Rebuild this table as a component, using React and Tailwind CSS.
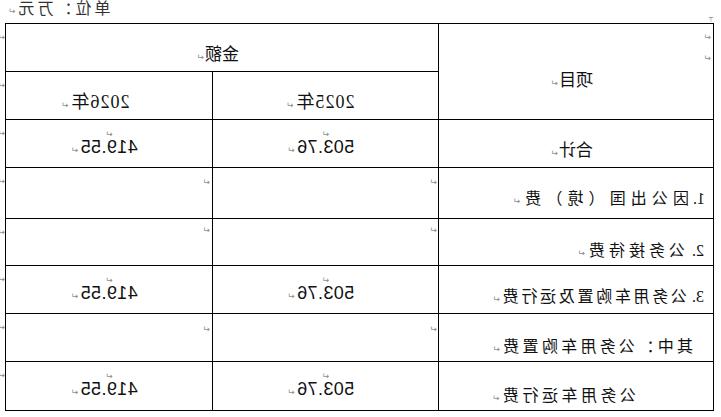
import React from "react";

// 段落标记（Word 的回车符）
const Mark = ({ className = "" }) => (
  <span
    className={`inline-block font-['DejaVu_Sans',sans-serif] text-[9px] leading-[8px] tracking-normal text-[#8c8c8c] ${className}`}
  >
    ↵
  </span>
);

// 居中文字后面的回车符，不占宽度
const TailMark = ({ className = "" }) => (
  <span className="inline-block w-0 whitespace-nowrap text-left">
    <Mark className={className} />
  </span>
);

const cell = "border-r border-b border-black";

const NumberCell = ({ value, pad = "" }) => (
  <div className={`${cell} text-center`}>
    <div className="mt-[6px] h-[8px] leading-[8px]">
      <Mark />
    </div>
    <div
      className={`mt-[2px] whitespace-nowrap font-['Liberation_Sans',sans-serif] text-[18px] leading-[22px] tracking-[0.4px] ${pad}`}
    >
      {value}
      <TailMark className="ml-[2px]" />
    </div>
  </div>
);

const EmptyCell = ({ pad }) => (
  <div className={`${cell} ${pad}`}>
    <div className="h-[8px] leading-[8px]">
      <Mark />
    </div>
  </div>
);

const rows = [
  { num: "1.", text: "因公出国（境）费", pl: "pl-[8px]", gap: "ml-[4px]", tr: "tracking-[5.1px]", pt: "pt-[18px]", nums: false, mt: "pt-[6px]" },
  { num: "2.", text: "公务接待费", pl: "pl-[9px]", gap: "ml-[7px]", tr: "tracking-[4px]", pt: "pt-[19px]", nums: false, mt: "pt-[3px]" },
  { num: "3.", text: "公务用车购置及运行费", pl: "pl-[9px]", gap: "ml-[5px]", tr: "tracking-[2.7px]", pt: "pt-[18px]", nums: true },
  { num: "", text: "其中：公务用车购置费", pl: "pl-[20px]", gap: "", tr: "tracking-[3.3px]", pt: "pt-[20px]", nums: false, mt: "pt-[7px]" },
  { num: "", text: "公务用车运行费", pl: "pl-[77px]", gap: "", tr: "tracking-[3.5px]", pt: "pt-[21px]", nums: true },
];

const rowMarks = ["mt-[6px]", "mt-[40px]", "mt-[40px]", "mt-[40px]", "mt-[43px]", "mt-[39px]", "mt-[40px]", "mt-[40px]"];

export default function App() {
  return (
    <div className="w-[721px] h-[417px] overflow-hidden bg-white -scale-x-100 text-[#111] font-['Noto_Sans_CJK_SC',sans-serif]">
      {/* 顶部：单位 */}
      <div className="h-[23px] flex justify-between">
        <span className="ml-[8px] mt-[15px] font-['DejaVu_Sans',sans-serif] text-[7px] leading-[7px] text-[#8c8c8c]">
          ┬
        </span>
        <div className="pr-[8px] whitespace-nowrap text-[16px] leading-[14px] text-[#333]">
          <span className="tracking-[3px]">单位：万元</span>
          <Mark />
        </div>
      </div>

      <div className="flex">
        <div className="ml-[7px] grid grid-cols-[275px_226px_207px] grid-rows-[48px_48px_48px_51px_47px_48px_48px_49px] border-l border-t border-black">
          {/* 项目 */}
          <div className={`${cell} row-span-2`}>
            <div className="ml-[2px] mt-[5px] h-[8px] leading-[8px]">
              <Mark />
            </div>
            <div className="ml-[2px] mt-[13px] h-[8px] leading-[8px]">
              <Mark />
            </div>
            <div className="mt-[10px] text-center text-[17px] leading-[22px]">
              项目
              <TailMark className="ml-[1px]" />
            </div>
          </div>

          {/* 金额 */}
          <div className={`${cell} col-span-2 pt-[18px] text-center text-[17px] leading-[22px]`}>
            金额
            <TailMark className="ml-[1px]" />
          </div>

          <div className={`${cell} pt-[19px] text-center whitespace-nowrap font-['Liberation_Serif','Noto_Sans_CJK_SC',serif] text-[18px] leading-[22px]`}>
            <span className="tracking-[1px]">2025</span>年
            <TailMark className="ml-[3px]" />
          </div>
          <div className={`${cell} pt-[19px] pl-[17px] text-center whitespace-nowrap font-['Liberation_Serif','Noto_Sans_CJK_SC',serif] text-[18px] leading-[22px]`}>
            <span className="tracking-[1px]">2026</span>年
            <TailMark className="ml-[3px]" />
          </div>

          {/* 合计 */}
          <div className={`${cell} pt-[18px] text-center text-[17px] leading-[22px]`}>
            合计
            <TailMark className="ml-[1px]" />
          </div>
          <NumberCell value="503.76" />
          <NumberCell value="419.55" />

          {rows.map((r) => (
            <React.Fragment key={r.text}>
              <div className={`${cell} ${r.pt} ${r.pl} whitespace-nowrap text-[16px] leading-[22px]`}>
                {r.num && (
                  <span className="font-['Liberation_Serif',serif]">{r.num}</span>
                )}
                <span className={`inline-block ${r.gap} ${r.tr}`}>{r.text}</span>
                <Mark />
              </div>
              {r.nums ? (
                <>
                  <NumberCell value="503.76" />
                  <NumberCell value="419.55" />
                </>
              ) : (
                <>
                  <EmptyCell pad={`${r.mt} pl-[1px]`} />
                  <EmptyCell pad={`${r.mt} pl-[2px]`} />
                </>
              )}
            </React.Fragment>
          ))}
        </div>

        {/* 行尾标记 */}
        <div className="flex flex-col">
          {rowMarks.map((m, i) => (
            <div key={i} className={`${m} h-[8px] leading-[8px]`}>
              <Mark />
            </div>
          ))}
        </div>
      </div>
    </div>
  );
}
